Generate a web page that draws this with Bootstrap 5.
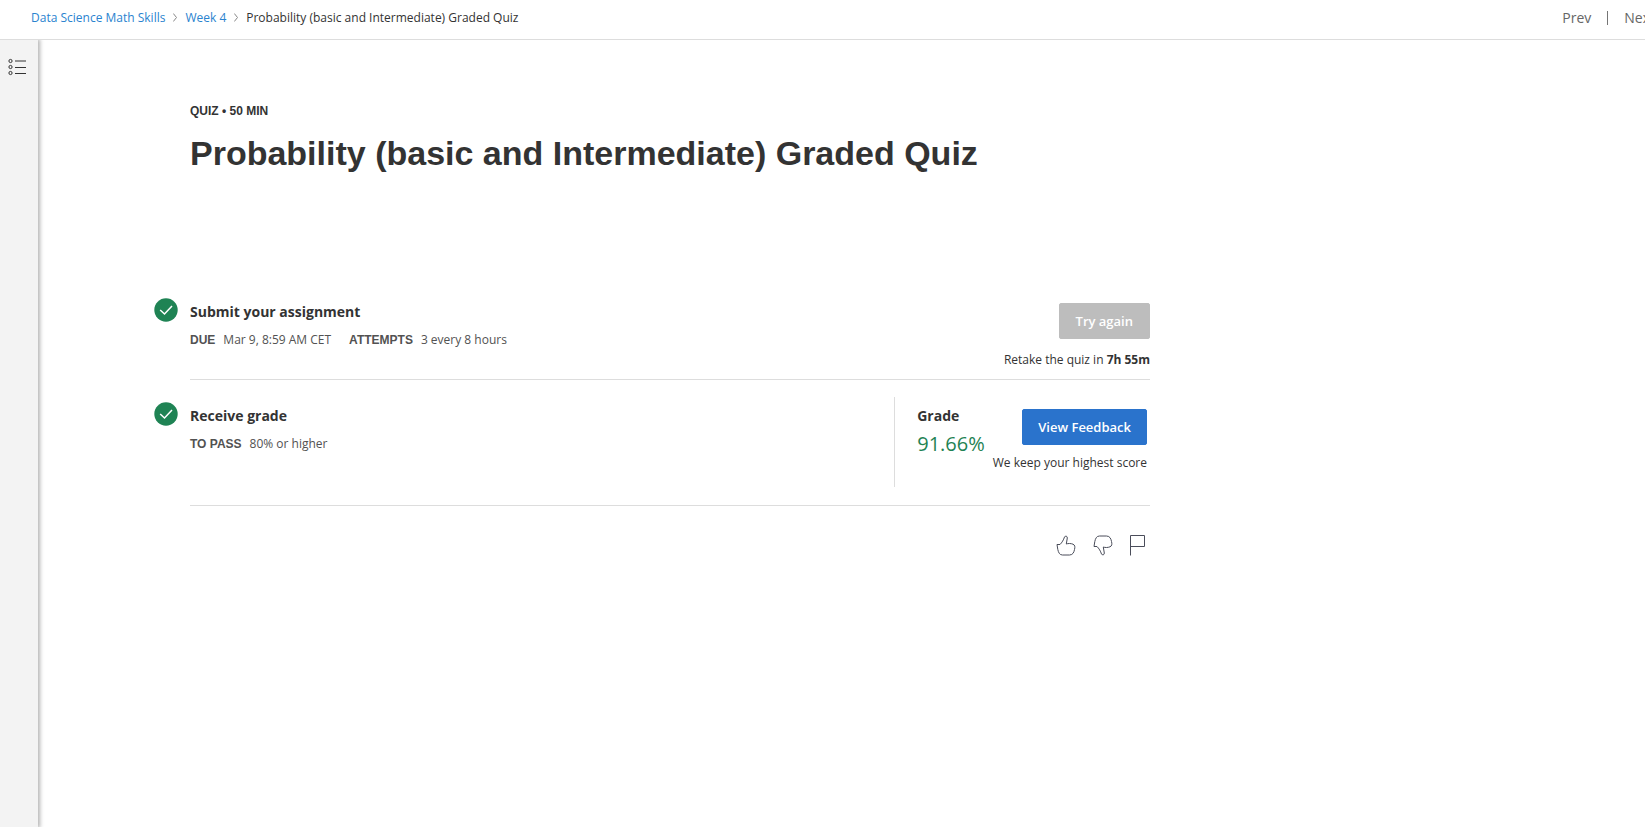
<!DOCTYPE html>
<html lang="en">
<head>
<meta charset="utf-8">
<meta name="viewport" content="width=device-width, initial-scale=1">
<title>Probability (basic and Intermediate) Graded Quiz</title>
<link href="https://cdn.jsdelivr.net/npm/bootstrap@5.3.0/dist/css/bootstrap.min.css" rel="stylesheet">
<style>
  body { font-family: "Open Sans", sans-serif; font-size: 12px; line-height: 20px; color: #333; background: #fff; }
  a { text-decoration: none; }
  .topbar { height: 40px; padding-left: 31px; border-bottom: 1px solid #ddd; white-space: nowrap; }
  .breadcrumb { --bs-breadcrumb-margin-bottom: 0; gap: 8px; }
  .breadcrumb a { color: #2a83cf; }
  .item-nav { gap: 16px; margin-right: -10px; font-size: 14px; }
  .item-nav a { color: #666; }
  .item-nav .rule { width: 1px; height: 14px; background: #757575; }
  .rail { width: 38px; flex: none; background: #f3f3f3; box-shadow: 1px 0 4px 1px rgba(0,0,0,.3); padding: 18px 8px; }
  .quiz { padding: 61px 16px 0 116px; }
  .quiz-inner { max-width: 996px; }
  .quiz-head { padding-left: 36px; margin-bottom: 123px; }
  .arial { font-family: "Liberation Sans", Arial, sans-serif; font-weight: 700; }
  h1.arial { font-size: 34px; line-height: 44px; margin: 10px 0 0; }
  h2 { font-size: 14px; line-height: 24px; font-weight: 700; margin: 0; }
  .step { gap: 12px; }
  .step-icon { flex: none; }
  .step-icon-grade { margin-top: 22px; }
  .step-body { border-bottom: 1px solid #ddd; }
  .submit-text { padding-top: 2px; }
  .meta { margin-top: 6px; color: #525252; column-gap: 18px; }
  .meta dt, .meta dd { margin: 0; }
  .meta dd { font-weight: 400; }
  .btn { --bs-btn-font-size: 13px; --bs-btn-font-weight: 600; --bs-btn-line-height: 20px; --bs-btn-padding-x: 16px; --bs-btn-padding-y: 7px; --bs-btn-border-radius: 2px; }
  .btn-retry { --bs-btn-disabled-color: #fff; --bs-btn-disabled-bg: #bdbdbd; --bs-btn-disabled-border-color: #bdbdbd; --bs-btn-disabled-opacity: 1; }
  .btn-feedback { --bs-btn-padding-x: 15px; --bs-btn-color: #fff; --bs-btn-bg: #2a73cc; --bs-btn-border-color: #2a73cc; --bs-btn-hover-color: #fff; --bs-btn-hover-bg: #1f5fae; }
  .submit-side { padding: 5px 0 9px; gap: 11px; }
  .grade-body { padding: 17px 0 18px; }
  .grade-text { padding-top: 7px; }
  .grade-side { border-left: 1px solid #ddd; padding: 7px 3px 14px 22px; gap: 8px; min-height: 90px; }
  .score { font-size: 20px; line-height: 28px; color: #1f8354; margin-top: 2px; }
  .feedback-side { padding-top: 5px; gap: 8px; }
  .reactions { padding: 29px 5px 0 0; gap: 17px; }
  .reactions button { background: none; border: 0; padding: 0; display: flex; }
</style>
</head>
<body class="d-flex flex-column min-vh-100">
<header class="topbar d-flex align-items-center justify-content-between overflow-hidden">
  <nav aria-label="Breadcrumb" class="pb-1">
    <ol class="breadcrumb align-items-center">
      <li><a href="#">Data Science Math Skills</a></li>
      <li class="d-flex" aria-hidden="true"><svg width="4" height="9" viewBox="0 0 4 9" fill="none" stroke="#888"><path d="M.3.5 3.5 4.5.3 8.5"/></svg></li>
      <li><a href="#">Week 4</a></li>
      <li class="d-flex" aria-hidden="true"><svg width="4" height="9" viewBox="0 0 4 9" fill="none" stroke="#888"><path d="M.3.5 3.5 4.5.3 8.5"/></svg></li>
      <li aria-current="page">Probability (basic and Intermediate) Graded Quiz</li>
    </ol>
  </nav>
  <nav aria-label="Items" class="item-nav d-flex align-items-center pb-1">
    <a href="#">Prev</a><span class="rule"></span><a href="#">Next</a>
  </nav>
</header>
<div class="d-flex flex-grow-1 overflow-hidden">
  <aside class="rail">
    <a href="#" class="d-flex" aria-label="Course outline">
      <svg width="18" height="18" viewBox="0 0 18 18" fill="none" stroke="#333"><circle cx="2.5" cy="3" r="1.6"/><circle cx="2.5" cy="9" r="1.6"/><circle cx="2.5" cy="15" r="1.6"/><path d="M7 3h11M7 9.5h11M7 15.5h11"/></svg>
    </a>
  </aside>
  <main class="quiz flex-grow-1">
    <div class="quiz-inner">
      <div class="quiz-head">
        <div class="arial">QUIZ • 50 MIN</div>
        <h1 class="arial">Probability (basic and Intermediate) Graded Quiz</h1>
      </div>

      <section class="step d-flex">
        <svg class="step-icon" width="24" height="24" viewBox="0 0 24 24"><circle cx="12" cy="12" r="11.7" fill="#1f8354"/><path d="M6.2 12 10.5 16 18 8" fill="none" stroke="#fff" stroke-width="1.5"/></svg>
        <div class="step-body d-flex justify-content-between flex-grow-1">
          <div class="submit-text">
            <h2>Submit your assignment</h2>
            <dl class="meta d-flex flex-wrap mb-0">
              <div class="d-flex gap-2"><dt class="arial">DUE</dt><dd>Mar 9, 8:59 AM CET</dd></div>
              <div class="d-flex gap-2"><dt class="arial">ATTEMPTS</dt><dd>3 every 8 hours</dd></div>
            </dl>
          </div>
          <div class="submit-side d-flex flex-column align-items-end">
            <button type="button" class="btn btn-retry" disabled>Try again</button>
            <div>Retake the quiz in <strong>7h 55m</strong></div>
          </div>
        </div>
      </section>

      <section class="step d-flex">
        <svg class="step-icon step-icon-grade" width="24" height="24" viewBox="0 0 24 24"><circle cx="12" cy="12" r="11.7" fill="#1f8354"/><path d="M6.2 12 10.5 16 18 8" fill="none" stroke="#fff" stroke-width="1.5"/></svg>
        <div class="step-body grade-body d-flex justify-content-between flex-grow-1">
          <div class="grade-text">
            <h2>Receive grade</h2>
            <dl class="meta d-flex mb-0">
              <div class="d-flex gap-2"><dt class="arial">TO PASS</dt><dd>80% or higher</dd></div>
            </dl>
          </div>
          <div class="grade-side d-flex">
            <div>
              <h2>Grade</h2>
              <div class="score">91.66%</div>
            </div>
            <div class="feedback-side d-flex flex-column align-items-end">
              <button type="button" class="btn btn-feedback">View Feedback</button>
              <div>We keep your highest score</div>
            </div>
          </div>
        </div>
      </section>

      <div class="reactions d-flex justify-content-end">
        <button type="button" aria-label="Like"><svg width="20" height="21" viewBox="0 0 20 21" fill="none" stroke="#4a4d5a"><path d="M1 9.5H4C6 7.5 7.5 5 8.5 2 9.2.5 11.5 1 11.3 3L10.3 9C12 8.3 15 8.3 17 9.2 19 10 19.2 12 18.5 14.5 18 17 17 20 13.5 20H6.5C3.5 20 2.5 17.5 1.8 14.5Z"/></svg></button>
        <button type="button" aria-label="Dislike"><svg width="20" height="21" viewBox="0 0 20 21" fill="none" stroke="#4a4d5a"><path d="M1 11.5H4C6 13.5 7.5 16 8.5 19 9.2 20.5 11.5 20 11.3 18L10.3 12C12 12.7 15 12.7 17 11.8 19 11 19.2 9 18.5 6.5 18 4 17 1 13.5 1H6.5C3.5 1 2.5 3.5 1.8 6.5Z"/></svg></button>
        <button type="button" aria-label="Flag"><svg width="15" height="21" viewBox="0 0 15 21" fill="none" stroke="#4a4d5a"><path d="M.5 20.5V.5H14.5V11.5H.5"/></svg></button>
      </div>
    </div>
  </main>
</div>
<script src="https://cdn.jsdelivr.net/npm/bootstrap@5.3.0/dist/js/bootstrap.bundle.min.js"></script>
</body>
</html>
